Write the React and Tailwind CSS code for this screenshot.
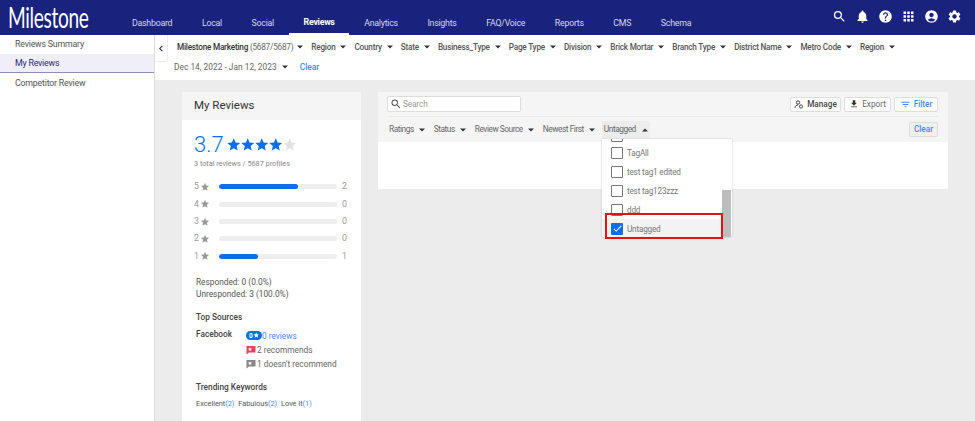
import React from "react";
import { MdSearch, MdNotifications, MdHelp, MdApps, MdAccountCircle, MdSettings, MdFilterList, MdFileDownload, MdChevronLeft, MdStar, MdCheck } from "react-icons/md";

const Caret = ({ up, className = "" }) => (
  <svg width="6" height="4" viewBox="0 0 6 4" className={className}>
    <path d={up ? "M0 3.5L3 0.5L6 3.5Z" : "M0 0.5L6 0.5L3 3.5Z"} fill="#333" />
  </svg>
);

const FlagIcon = ({ color }) => (
  <svg width="10" height="10" viewBox="0 0 10 10" className="mr-[1px]">
    <path d="M0.5 1H9.5V7.5H3L0.5 9.5Z" fill={color} />
    <path d="M4 2.2l.6 1.3 1.4.1-1 1 .3 1.4-1.3-.7-1.3.7.3-1.4-1-1 1.4-.1z" fill="#fff" />
  </svg>
);

const nav = ["Dashboard", "Local", "Social", "Reviews", "Analytics", "Insights", "FAQ/Voice", "Reports", "CMS", "Schema"];
const filters = ["Region", "Country", "State", "Business_Type", "Page Type", "Division", "Brick Mortar", "Branch Type", "District Name", "Metro Code", "Region"];
const bars = [["5", 67, "2"], ["4", 0, "0"], ["3", 0, "0"], ["2", 0, "0"], ["1", 33, "1"]];
const tags = ["TagAll", "test tag1 edited", "test tag123zzz", "ddd"];

function Bar({ n, pct, count }) {
  return (
    <div className="flex items-center h-[17.4px] text-[8.8px] text-[#9a9a9a]">
      <span className="w-[6px]">{n}</span>
      <MdStar className="text-[#999] text-[10px]" />
      <div className="ml-[9px] w-[118px] h-[5px] rounded-full bg-[#eeeeee] overflow-hidden">
        <div className="h-full rounded-full bg-[#0a6fe8]" style={{ width: `${pct}%` }} />
      </div>
      <span className="ml-[5px]">{count}</span>
    </div>
  );
}

export default function App() {
  return (
    <div className="w-[975px] h-[421px] overflow-hidden flex flex-col bg-[#ececec] text-[#444] font-['Roboto',sans-serif]">
      <header className="h-[35px] shrink-0 bg-[#19227c] flex items-center text-white">
        <div className="w-[132px] pl-[8px] pb-[3px] shrink-0 font-['Lato',sans-serif] text-[29px] leading-none tracking-[-0.5px]">
          <span className="inline-block origin-left scale-x-[0.66]">Milestone</span>
        </div>
        <nav className="flex h-full -ml-[14.8px]">
          {nav.map((n) => (
            <div
              key={n}
              className={
                "h-full flex items-center pt-[13px] px-[14.8px] text-[8.8px] tracking-[-0.25px] " +
                (n === "Reviews" ? "font-bold border-b-2 border-white" : "text-[#d5d7ea]")
              }
            >
              {n}
            </div>
          ))}
        </nav>
        <div className="ml-auto mr-[13px] mb-[2px] flex items-center gap-[8px] text-[15px]">
          <MdSearch /><MdNotifications /><MdHelp /><MdApps /><MdAccountCircle /><MdSettings />
        </div>
      </header>

      <div className="flex-1 flex min-h-0">
        <aside className="w-[155px] shrink-0 bg-white border-r border-[#ddd] text-[8.8px] tracking-[-0.2px] text-[#555]">
          <div className="h-[19px] pl-[15px] pt-[1px] flex items-center">Reviews Summary</div>
          <div className="h-[19px] pl-[15px] pt-[2px] flex items-center bg-[#f0eff7] border-b border-[#8e8cb8] text-[#2a2a78]">My Reviews</div>
          <div className="h-[20px] pl-[15px] pt-[2px] flex items-center">Competitor Review</div>
        </aside>

        <main className="flex-1 min-w-0 flex flex-col">
          <div className="h-[45px] shrink-0 bg-white flex">
            <div className="w-[13px] h-[27px] flex items-center justify-center border-r border-b border-[#eee] rounded-br-[3px] text-[#222] text-[17px]">
              <MdChevronLeft />
            </div>
            <div className="pl-[9px] text-[8.2px] text-[#555]">
              <div className="h-[24px] flex items-center gap-[8px] font-medium whitespace-nowrap tracking-[-0.22px]">
                <span className="flex items-center gap-[4px] text-[#333]">
                  <span>Milestone Marketing <span className="font-normal text-[#666]">(5687/5687)</span></span>
                  <Caret />
                </span>
                {filters.map((f, i) => (
                  <span key={i} className="flex items-center gap-[5px]">{f}<Caret /></span>
                ))}
              </div>
              <div className="h-[17px] -ml-[3px] flex items-center text-[8.4px]">
                <span className="flex items-center gap-[5px] text-[#666]">Dec 14, 2022 - Jan 12, 2023<Caret /></span>
                <span className="ml-[12px] font-medium text-[#3d8bf0]">Clear</span>
              </div>
            </div>
          </div>

          <div className="flex-1 min-h-0 pt-[12px] pl-[27px] pr-[27px] flex items-start gap-[17px] overflow-hidden">
            <section className="w-[179px] h-[340px] shrink-0 bg-white">
              <div className="h-[28px] bg-[#f5f5f5] pl-[12px] flex items-center text-[11.5px] text-[#333]">My Reviews</div>
              <div className="pl-[12px] pt-[15px]">
                <div className="flex items-center h-[20px]">
                  <span className="text-[22px] leading-none text-[#0a6fe8] font-light">3.7</span>
                  <span className="ml-[2px] flex text-[15.5px] -space-x-[1.5px]">
                    <MdStar className="text-[#0a6fe8]" /><MdStar className="text-[#0a6fe8]" /><MdStar className="text-[#0a6fe8]" /><MdStar className="text-[#0a6fe8]" /><MdStar className="text-[#e2e2e2]" />
                  </span>
                </div>
                <div className="mt-[3px] text-[7.4px] tracking-[-0.05px] text-[#888]">3 total reviews / 5687 profiles</div>
                <div className="mt-[9px]">
                  {bars.map(([n, p, c]) => <Bar key={n} n={n} pct={p} count={c} />)}
                </div>
                <div className="pl-[2px] mt-[12px] text-[8.3px] text-[#555] leading-[11.5px]">
                  <div>Responded: 0 (0.0%)</div>
                  <div>Unresponded: 3 (100.0%)</div>
                  <div className="mt-[12px] font-medium text-[#444]">Top Sources</div>
                  <div className="mt-[5px] flex">
                    <span className="w-[50px] font-medium text-[#444]">Facebook</span>
                    <div className="leading-[14px]">
                      <div className="flex items-center text-[#4a8cf0]">
                        <span className="w-[16px] h-[9px] rounded-full bg-[#0a6fe8] flex items-center justify-center text-white text-[6.5px] font-bold">0<MdStar /></span>
                        0 reviews
                      </div>
                      <div className="flex items-center text-[#666]"><FlagIcon color="#e5455c" />2 recommends</div>
                      <div className="flex items-center text-[#666]"><FlagIcon color="#888" />1 doesn't recommend</div>
                    </div>
                  </div>
                  <div className="mt-[11px] font-medium text-[#444]">Trending Keywords</div>
                  <div className="mt-[5px] flex gap-[4px] text-[7.4px] tracking-[-0.05px] text-[#555]">
                    <span>Excellent<span className="text-[#4a8cf0]">(2)</span></span>
                    <span>Fabulous<span className="text-[#4a8cf0]">(2)</span></span>
                    <span>Love It<span className="text-[#4a8cf0]">(1)</span></span>
                  </div>
                </div>
              </div>
            </section>

            <section className="relative w-[570px] h-[97px] shrink-0 bg-white">
              <div className="h-[50px] bg-[#f5f5f5] pl-[11px] pr-[10px] text-[8.3px] text-[#666]">
                <div className="h-[25px] flex items-center justify-between border-b border-[#e8e8e8]">
                  <div className="w-[134px] h-[16px] -ml-[2px] bg-white border border-[#ddd] rounded-[2px] flex items-center pl-[2px] text-[#999] text-[8.2px] tracking-[-0.1px]">
                    <MdSearch className="text-[#555] text-[12px]" /><span className="ml-[1px]">Search</span>
                  </div>
                  <div className="flex gap-[3px] font-medium text-[8.2px]">
                    <button className="h-[15px] w-[51px] bg-white border border-[#ddd] rounded-[2px] flex items-center justify-center gap-[3px] text-[#444]">
                      <svg width="10" height="9" viewBox="0 0 10 9" fill="none" stroke="#444" strokeWidth="1"><circle cx="4" cy="2.5" r="1.7"/><path d="M1 8c0-2 1.3-3 3-3"/><circle cx="7" cy="6.5" r="1.6"/></svg>
                      Manage
                    </button>
                    <button className="h-[15px] w-[47px] bg-white border border-[#ddd] rounded-[2px] flex items-center justify-center gap-[3px] font-normal">
                      <MdFileDownload className="text-[#333] text-[10px]" />Export
                    </button>
                    <button className="h-[15px] w-[44px] bg-white border border-[#ddd] rounded-[2px] flex items-center justify-center gap-[3px] text-[#3d8bf0]">
                      <MdFilterList className="text-[11px]" />Filter
                    </button>
                  </div>
                </div>
                <div className="h-[25px] flex items-center justify-between">
                  <div className="flex items-center gap-[9px] tracking-[-0.45px]">
                    {["Ratings", "Status", "Review Source", "Newest First"].map((f) => (
                      <span key={f} className="flex items-center gap-[5px] whitespace-nowrap">{f}<Caret /></span>
                    ))}
                    <span className="-ml-[2px] h-[17px] px-[2px] bg-[#ededed] rounded-t-[2px] flex items-center gap-[6px] whitespace-nowrap">Untagged<Caret up /></span>
                  </div>
                  <button className="h-[15px] w-[29px] bg-[#f0f0f0] border border-[#ddd] rounded-[2px] text-[#3d8bf0] font-medium text-[8.2px]">Clear</button>
                </div>
              </div>

              <div className="absolute left-[224px] top-[47px] w-[130px] h-[98px] bg-white shadow-[0_0_2px_rgba(0,0,0,0.25)] rounded-b-[2px] overflow-hidden flex text-[8.2px] tracking-[-0.2px] text-[#777]">
                <div className="flex-1 -mt-[8px]">
                  <div className="h-[11px] pl-[9px]"><span className="block w-[12px] h-[11px] border-[1.5px] border-[#777] rounded-[1px]" /></div>
                  <div className="mt-[2px]">
                    {tags.map((t) => (
                      <div key={t} className="h-[18.8px] pl-[9px] flex items-center gap-[4px]">
                        <span className="w-[12px] h-[12px] border-[1.5px] border-[#777] rounded-[1px] shrink-0" />{t}
                      </div>
                    ))}
                    <div className="h-[19px] pl-[9px] bg-[#f3f3f3] flex items-center gap-[4px]">
                      <span className="w-[12px] h-[12px] bg-[#0a6fe8] rounded-[1px] text-white flex items-center justify-center shrink-0 text-[11px]"><MdCheck /></span>Untagged
                    </div>
                    <div className="h-[4px] bg-[#f3f3f3]" />
                  </div>
                </div>
                <div className="w-[9px] h-full mr-[1px] flex flex-col"><div className="h-[51px]" /><div className="flex-1 bg-[#bdbdbd]" /></div>
              </div>
              <div className="absolute left-[227px] top-[121px] w-[118px] h-[26px] border-[2px] border-[#e81010]" />
            </section>
          </div>
        </main>
      </div>
    </div>
  );
}
